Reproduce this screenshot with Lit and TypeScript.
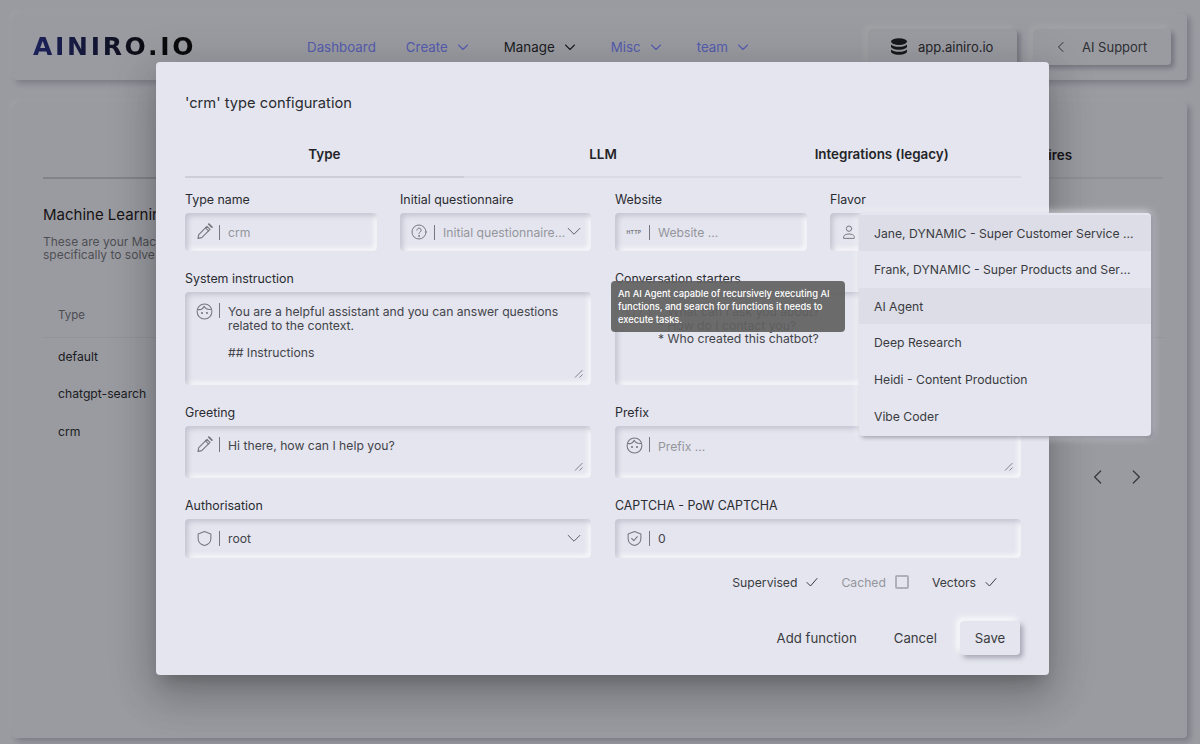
import { LitElement, html, css, svg } from "lit";
import { customElement } from "lit/decorators.js";

const s = (w: number, h: number, body: unknown, cls = "ic") =>
  html`<svg class=${cls} width=${w} height=${h} viewBox="0 0 24 24" fill="none" stroke="currentColor" stroke-width="1.5" stroke-linecap="round" stroke-linejoin="round">${body}</svg>`;

const chevDown = (w = 12) => s(w, w, svg`<path d="M3 8l9 9 9-9" stroke-width="2.2"/>`);
const thinDown = () => s(14, 14, svg`<path d="M2 7.5l10 10 10-10" stroke-width="1.6"/>`);
const pencil = () => s(18, 18, svg`<path d="M4 20.5l1-5L16 4.5l4 4L9 19.5z"/><path d="M14 6.5l4 4"/><path d="M18.5 1.5l4 4" stroke-width="2.4"/>`);
const help = () => s(16, 16, svg`<circle cx="12" cy="12" r="10.5"/><path d="M8.8 9.3a3.2 3.2 0 1 1 4.9 2.7c-1.1.7-1.7 1.3-1.7 2.6"/><circle cx="12" cy="18" r=".6" fill="currentColor"/>`);
const person = () => s(16, 16, svg`<circle cx="12" cy="7" r="4"/><path d="M4 21v-2c0-2.5 4-4 8-4s8 1.500 8 4v2z"/>`);
const face = () => s(17, 17, svg`<circle cx="12" cy="12" r="10.500"/><path d="M2.500 9c3 .8 7-.2 9-4.500 1.500 3 5 5 10 4.500"/><circle cx="8.500" cy="14" r=".7" fill="currentColor"/><circle cx="15.500" cy="14" r=".7" fill="currentColor"/>`);
const shield = () => s(17, 17, svg`<path d="M12 2l9 3.500v6.500c0 5-3.800 8.700-9 10-5.200-1.300-9-5-9-10V5.500z"/>`);
const shieldCheck = () => s(17, 17, svg`<path d="M12 2l9 3.500v6.500c0 5-3.800 8.700-9 10-5.200-1.300-9-5-9-10V5.500z"/><path d="M8 12l3 3 5-5.500"/>`);
const check = () => s(12, 12, svg`<path d="M2 13l7 7L22 5" stroke-width="2"/>`);
const grip = () => html`<svg class="grip" width="9" height="9" viewBox="0 0 9 9" fill="none" stroke="#77787e" stroke-width=".9"><path d="M1 8.500L8.500 1M5.500 8.500L8.500 5.500"/></svg>`;
const db = () => html`<svg width="18" height="18" viewBox="0 0 18 18" fill="#232428"><ellipse cx="9" cy="3.600" rx="8" ry="3.300"/><path d="M1 6.400c1.500 1.700 4.500 2.400 8 2.400s6.500-.7 8-2.400v2.200c0 1.800-3.600 3.200-8 3.200s-8-1.400-8-3.200z"/><path d="M1 11.400c1.500 1.700 4.500 2.400 8 2.400s6.500-.7 8-2.400v2.200c0 1.800-3.600 3.200-8 3.200s-8-1.400-8-3.200z"/></svg>`;
const chevLeft = (n = 16) => s(n, n, svg`<path d="M16 3l-9 9 9 9" stroke-width="2"/>`);
const chevRight = (n = 16) => s(n, n, svg`<path d="M8 3l9 9-9 9" stroke-width="2"/>`);

@customElement("app-root")
export class AppRoot extends LitElement {
  static styles = css`
    :host { display: block; width: 1200px; height: 744px; position: relative; overflow: hidden; background: #e4e5ee; font-family: Inter, "Liberation Sans", sans-serif; color: #2b2c31; font-size: 12.2px; }
    * { box-sizing: border-box; }
    svg { display: block; flex: none; }
    .page { height: 744px; padding: 14px 13px 6px; display: flex; flex-direction: column; gap: 23px; }
    .card { border-radius: 4px; background: #e4e5ee; box-shadow: 3px 3px 6px rgba(130,132,150,.5), -2px -2px 5px rgba(255,255,255,.35); }
    .top { height: 66px; display: flex; align-items: center; padding: 0 16px 0 20px; flex: none; }
    .logo { width: 160px; font-family: "DejaVu Sans", sans-serif; font-weight: 700; font-size: 25px; line-height: 24px; letter-spacing: 2.700px; white-space: nowrap; background: linear-gradient(90deg, #2a3286, #111114 75%); -webkit-background-clip: text; background-clip: text; color: transparent; }
    nav { display: flex; align-items: center; gap: 30px; margin-left: 114px; font-size: 13.350px; }
    .nv { display: flex; align-items: center; gap: 9px; color: #7c88ff; white-space: nowrap; }
    .nv.drop { padding-right: 5px; }
    .nv.dark { color: #2b2c31; }
    .nv.last { padding-right: 0; }
    .right { margin-left: auto; display: flex; gap: 16px; margin-top: -1px; }
    .tb { height: 36px; display: flex; align-items: center; border-radius: 4px; background: #e4e5ee; font-size: 13px; color: #45464c; box-shadow: 3px 3px 5px rgba(130,132,150,.6), -3px -3px 5px rgba(255,255,255,.5); }
    .tb.a { width: 149px; padding-left: 22px; gap: 10px; color: #35363b; }
    .tb.b { width: 138px; padding-left: 22px; gap: 15px; }
    .main { flex: 1; padding: 29px 24px 0 30px; }
    .tabs { display: grid; grid-template-columns: repeat(4, 1fr); border-bottom: 2px solid #d5d6df; }
    .tabs div { height: 47px; display: flex; align-items: center; justify-content: center; font-weight: 600; font-size: 13.400px; margin-bottom: -2px; border-bottom: 2px solid transparent; color: #1f2024; }
    .tabs .on { border-bottom-color: #c2c3cc; }
    .mh { margin-top: 26px; font-size: 15px; line-height: 20px; color: #1f2024; }
    .md { margin-top: 10px; font-size: 12px; line-height: 13px; color: #74757c; }
    .tbl { margin-top: 32.500px; width: 1120px; }
    .th { height: 44px; padding: 0 15px; display: flex; align-items: center; font-size: 11.500px; color: #72737a; border-bottom: 1px solid #d8d9e2; }
    .tr { height: 37.500px; padding: 0 15px; display: flex; align-items: center; font-size: 12.200px; color: #2c2d32; }
    .pager { display: flex; justify-content: flex-end; gap: 22px; padding-right: 19px; margin-top: 18.500px; color: #55565c; }
    .back { position: absolute; inset: 0; background: rgba(0,0,0,.32); }
    .modal { position: absolute; left: 156px; top: 62px; width: 893px; height: 613px; border-radius: 4px; background: #e4e5ee; padding: 31px 28px 20px 29px; box-shadow: 0 11px 15px -7px rgba(0,0,0,.2), 0 24px 38px 3px rgba(0,0,0,.14), 0 9px 46px 8px rgba(0,0,0,.12); }
    h2 { margin: 0 0 18px; font-weight: 400; font-size: 14.700px; line-height: 20px; color: #2b2c31; }
    .mtabs { display: grid; grid-template-columns: repeat(3, 1fr); border-bottom: 2px solid #d9dae3; margin-bottom: 14px; }
    .mtabs div { height: 47px; display: flex; align-items: center; justify-content: center; font-weight: 600; font-size: 13.400px; margin-bottom: -2px; border-bottom: 2px solid transparent; color: #232428; }
    .mtabs .on { border-bottom-color: #cdced6; }
    .grid { display: grid; grid-template-columns: 406px 406px; column-gap: 24px; row-gap: 20px; }
    .pair { display: grid; grid-template-columns: 192px 191px; column-gap: 23px; }
    .f label { display: block; height: 14px; line-height: 15px; margin-bottom: 7px; font-size: 12.400px; color: #2a2b30; white-space: nowrap; }
    .box { position: relative; height: 38px; border-radius: 4px; display: flex; align-items: center; padding: 0 10px; background: #e4e5ee; color: #77787e; box-shadow: inset 3px 3px 5px rgba(170,172,188,.55), inset -3px -3px 5px rgba(255,255,255,.7); font-size: 12.200px; }
    .box.area { align-items: flex-start; padding-top: 10px; }
    .box.ta { height: 93px; }
    .box.tb2 { height: 52px; }
    .box.tall { height: 39px; }
    .slot { width: 18px; height: 18px; display: flex; align-items: center; justify-content: center; margin-right: 6px; flex: none; }
    .slot .http { font-size: 5px; font-weight: 700; letter-spacing: .3px; color: #77787e; }
    .sep { width: 1px; height: 15px; background: #77787e; margin-right: 8px; flex: none; }
    .area .sep { margin-top: 1px; }
    .val { color: #43444a; white-space: pre-line; line-height: 13.700px; }
    .ph { color: #94959c; white-space: nowrap; overflow: hidden; }
    .area .val, .area .ph { margin-top: 3px; }
    .sel { margin-left: auto; margin-top: -2px; color: #55565c; }
    .grip { position: absolute; right: 8px; bottom: 7px; }
    .checks { margin-top: 14px; height: 20px; display: flex; justify-content: flex-end; align-items: center; padding-right: 24px; color: #3a3b41; }
    .ck { display: flex; align-items: center; gap: 9px; margin-left: 23px; }
    .ck.off { color: #94959c; }
    .cb { width: 14px; height: 14px; border: 2px solid #aeafb7; border-radius: 2px; }
    .acts { margin-top: 28.500px; height: 34px; display: flex; justify-content: flex-end; align-items: center; color: #3a3b41; font-size: 13.200px; }
    .acts span { margin-right: 37px; }
    .acts span.c { margin-right: 23px; }
    .save { width: 60px; height: 34px; margin-right: 1px; border-radius: 4px; display: flex; align-items: center; justify-content: center; background: #e4e5ee; box-shadow: 3px 3px 5px rgba(130,132,150,.65), -3px -3px 6px rgba(255,255,255,.95); }
    .tip { position: absolute; left: 611px; top: 281px; width: 234px; height: 51px; border-radius: 4px; background: rgba(97,97,97,.92); color: #fff; font-size: 9.300px; font-weight: 500; line-height: 13.300px; padding: 5.500px 7px; }
    .menu { position: absolute; left: 859px; top: 213px; width: 292px; height: 223px; padding: 1.600px 0; border-radius: 4px; background: #e4e5ee; box-shadow: 2px 2px 4px rgba(110,112,130,.6), 0 0 10px rgba(255,255,255,.85); }
    .mi { height: 36.600px; padding: 0 17px 0 15px; line-height: 38px; font-size: 12.200px; color: #3a3b41; white-space: nowrap; overflow: hidden; text-overflow: ellipsis; }
    .mi.hl { background: #dcdde6; }
  `;

  private field(label: string, icon: unknown, content: unknown, cls = "", tail: unknown = null) {
    return html`<div class="f"><label>${label}</label><div class="box ${cls}"><span class="slot">${icon}</span><span class="sep"></span>${content}${tail}</div></div>`;
  }

  render() {
    const val = (t: string) => html`<span class="val">${t}</span>`;
    const ph = (t: string) => html`<span class="ph">${t}</span>`;
    return html`
      <div class="page">
        <header class="card top">
          <div class="logo">AINIRO.IO</div>
          <nav>
            <div class="nv">Dashboard</div>
            <div class="nv drop">Create ${chevDown()}</div>
            <div class="nv drop dark">Manage ${chevDown()}</div>
            <div class="nv drop">Misc ${chevDown()}</div>
            <div class="nv drop last">team ${chevDown()}</div>
          </nav>
          <div class="right">
            <div class="tb a">${db()}<span>app.ainiro.io</span></div>
            <div class="tb b">${chevLeft(12)}<span>AI Support</span></div>
          </div>
        </header>
        <section class="card main">
          <div class="tabs"><div class="on">Types</div><div>Training data</div><div>History</div><div>Questionnaires</div></div>
          <div class="mh">Machine Learning types</div>
          <div class="md">These are your Machine Learning types, each trained<br />specifically to solve one problem for your business.</div>
          <div class="tbl">
            <div class="th">Type</div>
            <div class="tr">default</div>
            <div class="tr">chatgpt-search</div>
            <div class="tr">crm</div>
          </div>
          <div class="pager">${chevLeft()}${chevRight()}</div>
        </section>
      </div>
      <div class="back"></div>
      <div class="modal">
        <h2>'crm' type configuration</h2>
        <div class="mtabs"><div class="on">Type</div><div>LLM</div><div>Integrations (legacy)</div></div>
        <div class="grid">
          <div class="pair">
            ${this.field("Type name", pencil(), ph("crm"))}
            ${this.field("Initial questionnaire", help(), ph("Initial questionnaire..."), "", html`<span class="sel">${thinDown()}</span>`)}
          </div>
          <div class="pair">
            ${this.field("Website", html`<span class="http">HTTP</span>`, ph("Website ..."))}
            ${this.field("Flavor", person(), ph("Flavor ..."))}
          </div>
          ${this.field("System instruction", face(), val("You are a helpful assistant and you can answer questions\nrelated to the context.\n\n## Instructions"), "area ta", grip())}
          ${this.field("Conversation starters", help(), val("* What can I ask you about?\n* How do I contact you?\n* Who created this chatbot?"), "area ta", grip())}
          ${this.field("Greeting", pencil(), val("Hi there, how can I help you?"), "area tb2", grip())}
          ${this.field("Prefix", face(), ph("Prefix ..."), "area tb2", grip())}
          ${this.field("Authorisation", shield(), val("root"), "tall", html`<span class="sel">${thinDown()}</span>`)}
          ${this.field("CAPTCHA - PoW CAPTCHA", shieldCheck(), val("0"), "tall")}
        </div>
        <div class="checks">
          <div class="ck">Supervised ${check()}</div>
          <div class="ck off">Cached <span class="cb"></span></div>
          <div class="ck">Vectors ${check()}</div>
        </div>
        <div class="acts">
          <span>Add function</span>
          <span class="c">Cancel</span>
          <div class="save">Save</div>
        </div>
      </div>
      <div class="tip">An AI Agent capable of recursively executing AI functions, and search for functions it needs to execute tasks.</div>
      <div class="menu">
        <div class="mi hl">Jane, DYNAMIC - Super Customer Service Agent</div>
        <div class="mi">Frank, DYNAMIC - Super Products and Services</div>
        <div class="mi hl">AI Agent</div>
        <div class="mi">Deep Research</div>
        <div class="mi">Heidi - Content Production</div>
        <div class="mi">Vibe Coder</div>
      </div>
    `;
  }
}
